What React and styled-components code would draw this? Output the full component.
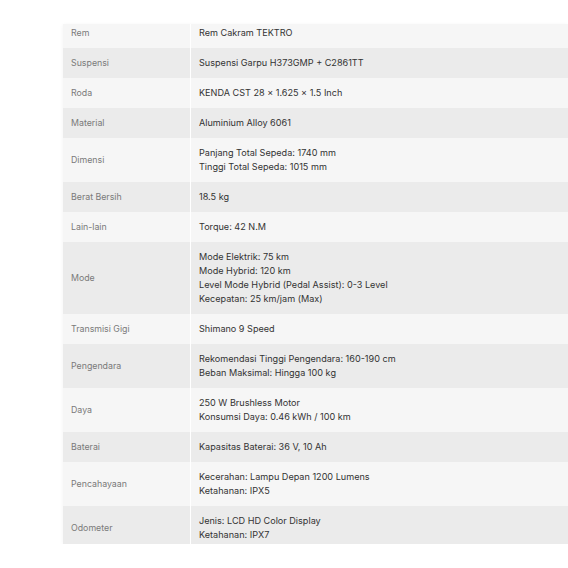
import React from "react";
import styled, { createGlobalStyle } from "styled-components";

const Global = createGlobalStyle`
  html, body { margin: 0; padding: 0; background: #ffffff; overflow: hidden; }
  body { font-family: Inter, "Noto Sans", sans-serif; }
`;

const Page = styled.div`
  padding: 24px 0 0 63px;
`;

const Table = styled.div`
  display: grid;
  grid-template-columns: 127px 1fr;
  column-gap: 1px;
  background: #ffffff;
  box-shadow: 0 1px 4px rgba(0, 0, 0, 0.05);
`;

const Cell = styled.div`
  background: ${(p) => (p.$dark ? "#ebebeb" : "#f6f6f6")};
  padding: ${(p) => (p.$first ? "2px" : "8px")} 8px
    ${(p) => (p.$last ? "2px" : "8px")} 8px;
  line-height: 14px;
`;

const Label = styled(Cell)`
  color: #7a7a7a;
  font-size: 8.8px;
  display: flex;
  align-items: center;
`;

const Value = styled(Cell)`
  color: #333333;
  font-size: 9.1px;
  display: flex;
  flex-direction: column;
`;

const rows = [
  ["Rem", ["Rem Cakram TEKTRO"]],
  ["Suspensi", ["Suspensi Garpu H373GMP + C2861TT"]],
  ["Roda", ["KENDA CST 28 × 1.625 × 1.5 Inch"]],
  ["Material", ["Aluminium Alloy 6061"]],
  ["Dimensi", ["Panjang Total Sepeda: 1740 mm", "Tinggi Total Sepeda: 1015 mm"]],
  ["Berat Bersih", ["18.5 kg"]],
  ["Lain-lain", ["Torque: 42 N.M"]],
  [
    "Mode",
    [
      "Mode Elektrik: 75 km",
      "Mode Hybrid: 120 km",
      "Level Mode Hybrid (Pedal Assist): 0-3 Level",
      "Kecepatan: 25 km/jam (Max)",
    ],
  ],
  ["Transmisi Gigi", ["Shimano 9 Speed"]],
  ["Pengendara", ["Rekomendasi Tinggi Pengendara: 160-190 cm", "Beban Maksimal: Hingga 100 kg"]],
  ["Daya", ["250 W Brushless Motor", "Konsumsi Daya: 0.46 kWh / 100 km"]],
  ["Baterai", ["Kapasitas Baterai: 36 V, 10 Ah"]],
  ["Pencahayaan", ["Kecerahan: Lampu Depan 1200 Lumens", "Ketahanan: IPX5"]],
  ["Odometer", ["Jenis: LCD HD Color Display", "Ketahanan: IPX7"]],
];

export default function App() {
  return (
    <>
      <Global />
      <Page>
        <Table>
          {rows.map(([label, values], i) => {
            const props = {
              $dark: i % 2 === 1,
              $first: i === 0,
              $last: i === rows.length - 1,
            };
            return (
              <React.Fragment key={label}>
                <Label {...props}>{label}</Label>
                <Value {...props}>
                  {values.map((v) => (
                    <span key={v}>{v}</span>
                  ))}
                </Value>
              </React.Fragment>
            );
          })}
        </Table>
      </Page>
    </>
  );
}
